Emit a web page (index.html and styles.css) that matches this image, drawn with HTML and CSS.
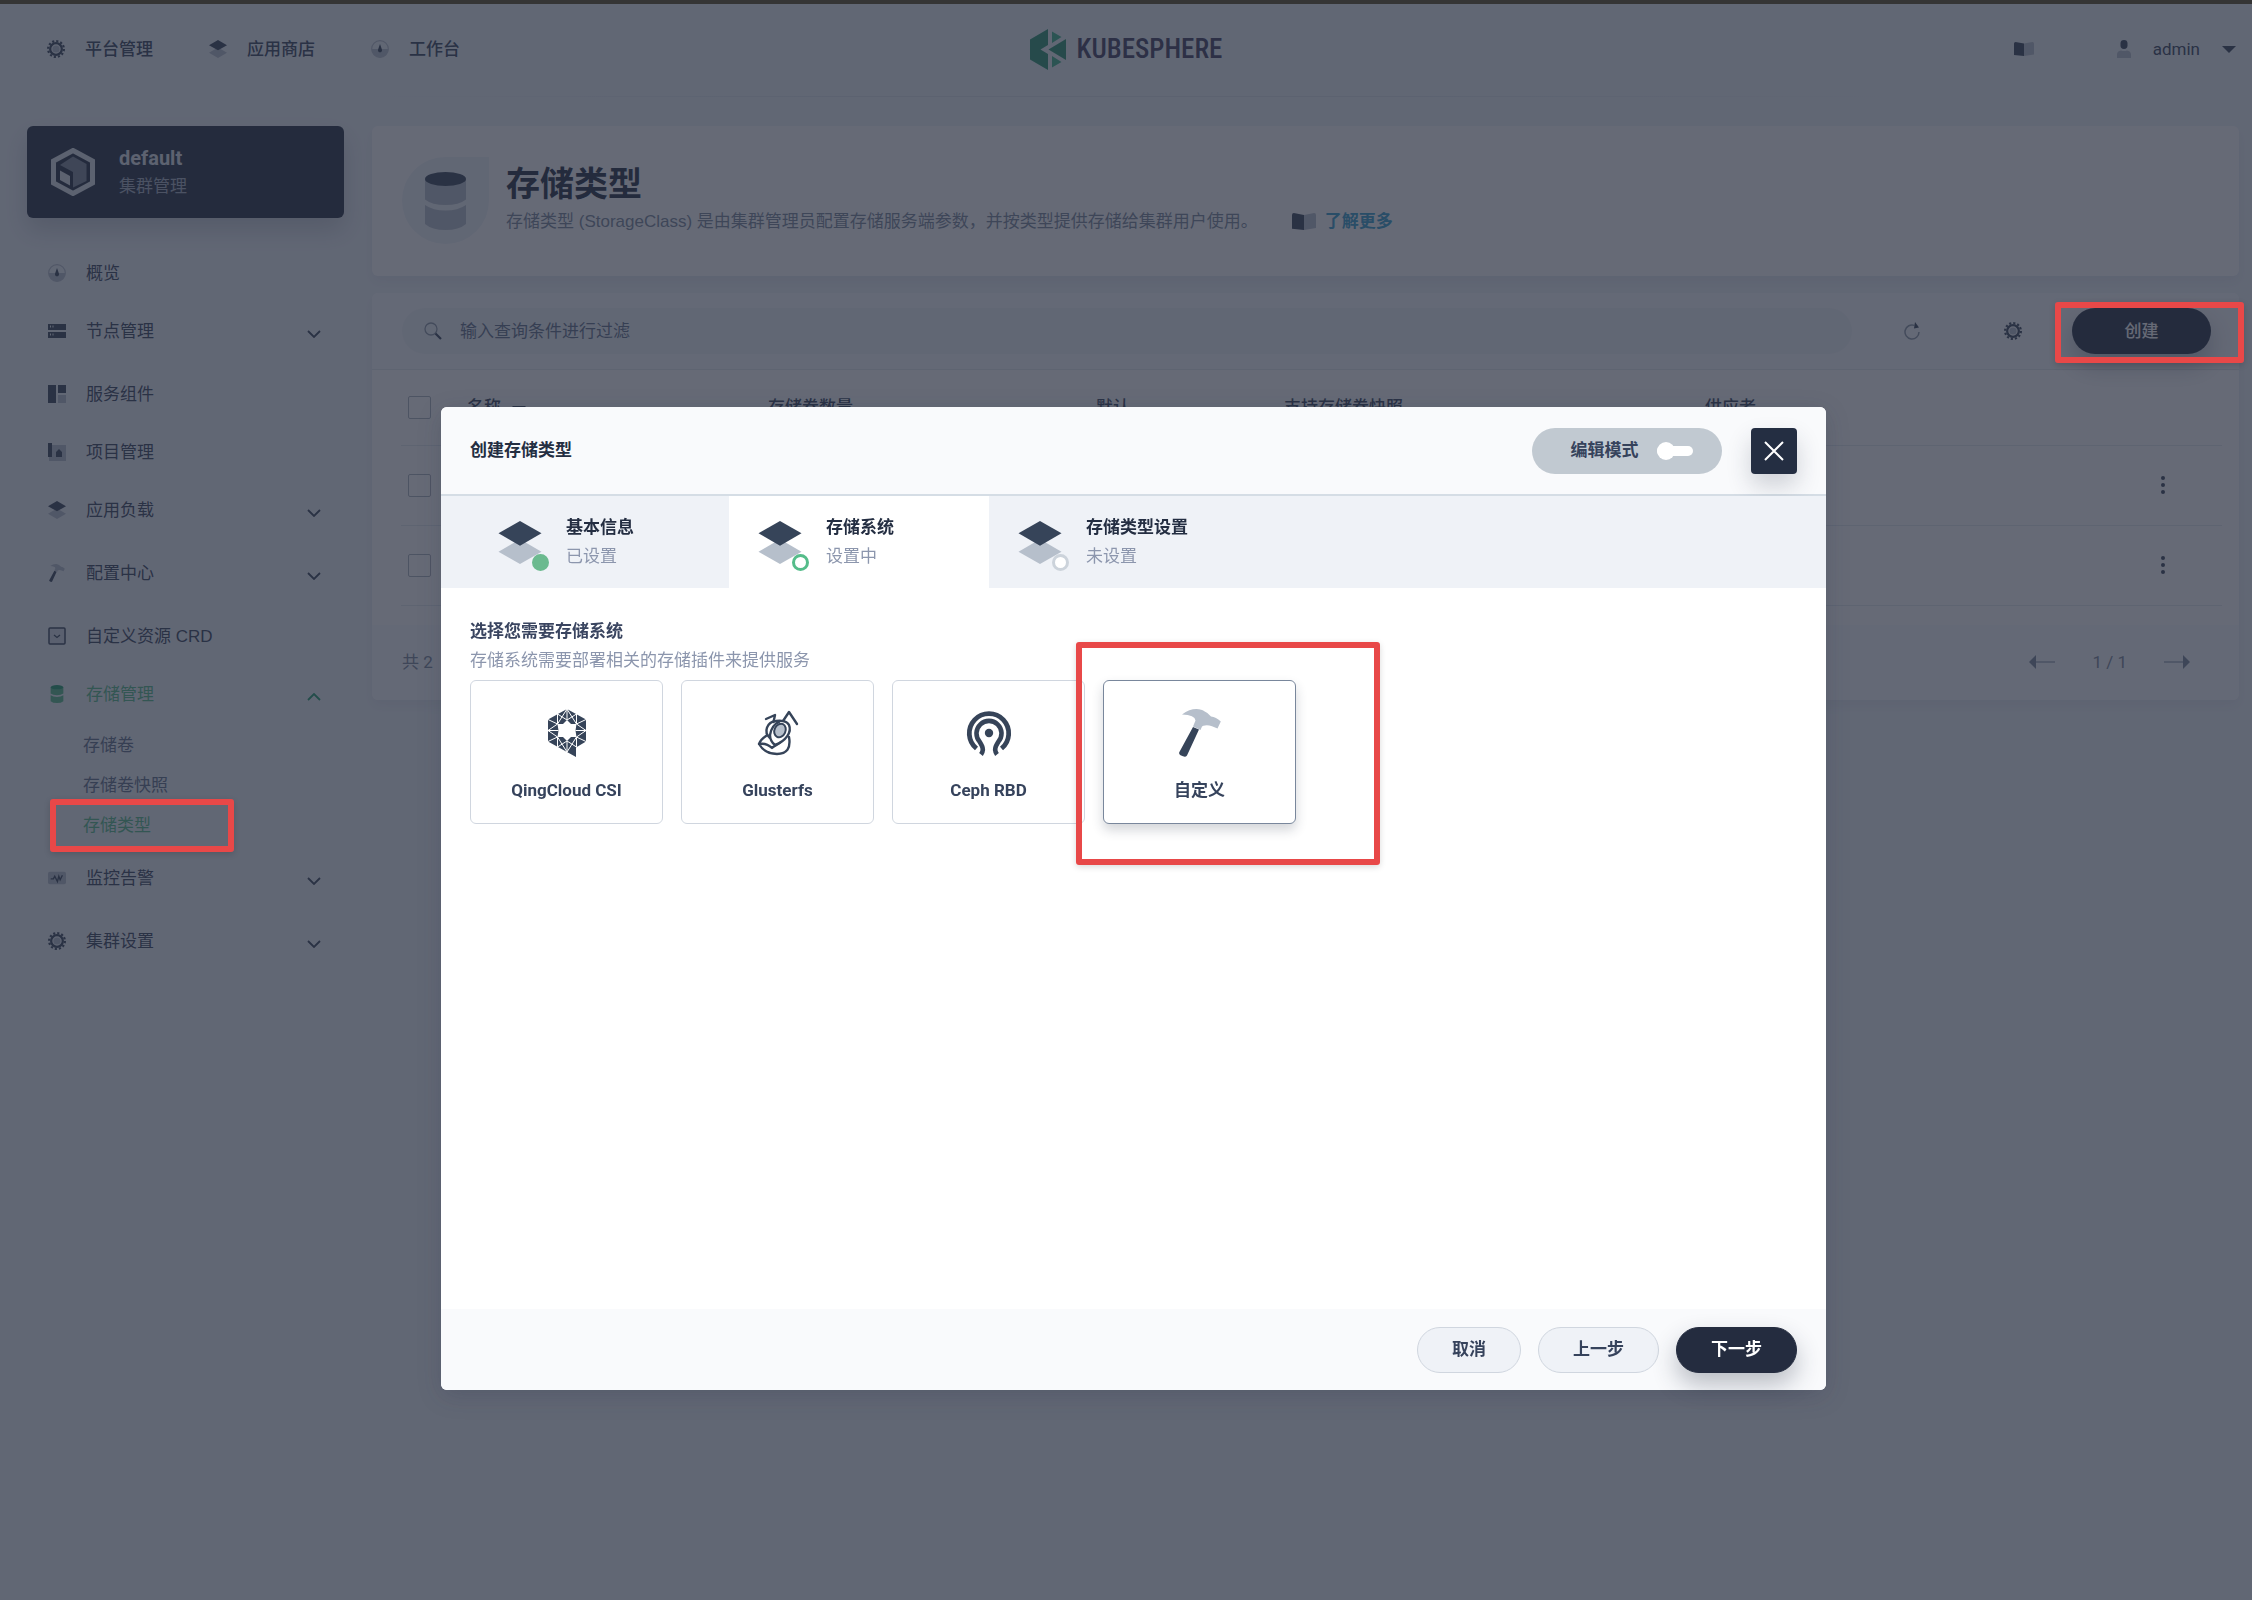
FILE: index.html
```html
<!DOCTYPE html>
<html lang="zh-CN">
<head>
<meta charset="utf-8">
<title>KubeSphere</title>
<meta name="viewport" content="width=device-width, initial-scale=1">
<link rel="stylesheet" href="styles.css">
</head>
<body>
<svg class="sprite" aria-hidden="true">
  <symbol id="i-gear" viewBox="0 0 16 16">
    <circle class="s-dark" cx="8" cy="8" r="7" stroke-width="2" stroke-dasharray="1.9 1.765"/>
    <circle class="s-dark" cx="8" cy="8" r="5.2" stroke-width="2"/>
    <circle class="light" cx="8" cy="8" r="3.2"/>
  </symbol>
  <symbol id="i-layers" viewBox="0 0 32 32">
    <path class="light" d="M16 13.500 32 22.800 16 32 0 22.800z"/>
    <path class="dark" d="M16 0 32 9.200 16 18.400 0 9.200z"/>
  </symbol>
  <symbol id="i-gauge" viewBox="0 0 16 16">
    <circle class="s-light" cx="8" cy="8" r="7.400" stroke-width="1"/>
    <path class="light" d="M.5 8h15a7.500 7.500 0 0 1-15 0z"/>
    <path class="dark" d="M8 3.500 9.700 8.500A1.800 1.800 0 1 1 6.300 8.500z"/>
  </symbol>
  <symbol id="i-book" viewBox="0 0 20 14">
    <path class="light" d="M10 1.500 18.500 0Q20 0 20 1.500V12.500L10 14z"/>
    <path class="dark" d="M0 1.500Q0 0 1.500 0L10 1.500V14L0 13z"/>
  </symbol>
  <symbol id="i-user" viewBox="0 0 14 18">
    <rect class="dark" x="3.500" y="0" width="7" height="9" rx="3.400"/>
    <path class="light" d="M0 18v-3.500C0 12 1.500 11 4 10.500q3 1.200 6 0c2.500.5 4 1.500 4 4V18z"/>
  </symbol>
  <symbol id="i-nodes" viewBox="0 0 18 16">
    <path class="dark" fill-rule="evenodd" d="M0 1h18v6H0zM2 2.500v2h1v-2zM4.500 2.500v2h1v-2zM0 9h18v6H0zM2 10.500v2h1v-2zM4.500 10.500v2h1v-2z"/>
  </symbol>
  <symbol id="i-components" viewBox="0 0 18 18">
    <path class="dark" d="M0 0h8v18H0zM10 0h8v8h-8z"/><path class="light" d="M10 10h8v8h-8z"/>
  </symbol>
  <symbol id="i-project" viewBox="0 0 18 18">
    <path class="light" d="M4 2h14v16H1V14h3z"/><path class="dark" d="M0 0h4v14H0zM11 6l3 3v5H8V9z"/>
  </symbol>
  <symbol id="i-hammer" viewBox="0 0 42 48">
    <path class="dark" d="M14 18 20 20.500 8 46.500Q6.500 48.500 4 47.300L1.500 46.200Q-.5 45 .4 43z"/>
    <path class="light" d="M3 5.500Q12-1 20 .3Q27 1.500 32 7.500Q37 8 41.800 12.500L38.500 19.500 33 17.200Q27 15 23 17.500L21.500 21 14 17.500 16.500 11.500Q16 6 3 5.500z"/>
  </symbol>
  <symbol id="i-crd" viewBox="0 0 18 18">
    <rect class="light" x="1" y="1" width="16" height="16" opacity=".4"/>
    <rect class="s-dark" x="1" y="1" width="16" height="16" rx="1" stroke-width="1.500"/>
    <path class="s-dark" d="M6 8l3 2.500L12 8" stroke-width="1.300"/>
  </symbol>
  <symbol id="i-disk" viewBox="0 0 41 58">
    <path class="light" d="M0 7h41v20.500Q34 33 20.500 33T0 27.500zM0 33q8 5.500 20.500 5.500T41 33v19q-7 6-20.500 6T0 52z"/>
    <ellipse class="dark" cx="20.500" cy="7" rx="20.500" ry="7"/>
  </symbol>
  <symbol id="i-monitor" viewBox="0 0 20 14">
    <rect class="light" width="20" height="14" rx="2"/>
    <path class="s-dark" d="M3 8h3l1.500-3 3 6L12 5l1.500 4L16 4" stroke-width="1.500"/>
  </symbol>
  <symbol id="i-chevron" viewBox="0 0 14 8"><path class="s-dark" d="M1 1l6 6 6-6" stroke-width="1.800"/></symbol>
  <symbol id="i-caret" viewBox="0 0 14 7"><path class="dark" d="M0 0h14L7 7z"/></symbol>
  <symbol id="i-arrow" viewBox="0 0 26 14"><path class="dark" d="M0 7 7 0v14z"/><path class="light" d="M7 6h19v2H7z"/></symbol>
  <symbol id="i-dots" viewBox="0 0 4 18"><g class="dark"><circle cx="2" cy="2" r="2"/><circle cx="2" cy="9" r="2"/><circle cx="2" cy="16" r="2"/></g></symbol>
</svg>

<div class="page">
  <header class="topbar">
    <nav class="topnav">
      <a href="#"><svg><use href="#i-gear"/></svg>平台管理</a>
      <a href="#"><svg><use href="#i-layers"/></svg>应用商店</a>
      <a href="#"><svg><use href="#i-gauge"/></svg>工作台</a>
    </nav>
    <a class="logo" href="#">
      <svg viewBox="0 0 36 41" aria-hidden="true">
        <path class="g1" d="M0 10.500 18 0v16L10.500 20.500 18 25v16L0 30.500z"/>
        <path class="g2" d="M22 2.500 31.500 8 22 14zM22 27l9.500 6L22 38.500z"/>
        <path class="g1" d="M36 10v21L18.500 20.500z"/>
      </svg>
      <span>KUBESPHERE</span>
    </a>
    <div class="account">
      <a class="docs" href="#" aria-label="文档"><svg><use href="#i-book"/></svg></a>
      <button class="user" type="button">
        <svg class="avatar"><use href="#i-user"/></svg><span>admin</span><svg class="caret"><use href="#i-caret"/></svg>
      </button>
    </div>
  </header>

  <div class="columns">
    <aside class="sidebar">
      <a class="cluster" href="#">
        <svg viewBox="0 0 44 48" aria-hidden="true">
          <path class="rim" d="M22 2.500 41.500 13v22L22 45.500 2.500 35V13z"/>
          <path class="cube" d="M22 8.500 35.500 16v17L22 39.500V24L9 17z"/>
          <path class="face" d="M9 22.500 19 28v9.500L9 32z"/>
        </svg>
        <span class="cluster-text"><strong>default</strong><span>集群管理</span></span>
      </a>
      <ul class="menu">
        <li><a href="#"><svg><use href="#i-gauge"/></svg>概览</a></li>
        <li class="more"><a href="#"><svg><use href="#i-nodes"/></svg>节点管理<svg class="chev"><use href="#i-chevron"/></svg></a></li>
        <li><a href="#"><svg><use href="#i-components"/></svg>服务组件</a></li>
        <li><a href="#"><svg><use href="#i-project"/></svg>项目管理</a></li>
        <li class="more"><a href="#"><svg><use href="#i-layers"/></svg>应用负载<svg class="chev"><use href="#i-chevron"/></svg></a></li>
        <li class="more"><a href="#"><svg><use href="#i-hammer"/></svg>配置中心<svg class="chev"><use href="#i-chevron"/></svg></a></li>
        <li><a class="plain" href="#"><svg><use href="#i-crd"/></svg>自定义资源 CRD</a></li>
        <li class="open"><a class="active" href="#"><svg><use href="#i-disk"/></svg>存储管理<svg class="chev up"><use href="#i-chevron"/></svg></a>
          <ul class="submenu">
            <li><a href="#">存储卷</a></li>
            <li><a href="#">存储卷快照</a></li>
            <li class="marked"><a class="active" href="#">存储类型</a><span class="mark mark-menu"></span></li>
          </ul>
        </li>
        <li class="more"><a href="#"><svg><use href="#i-monitor"/></svg>监控告警<svg class="chev"><use href="#i-chevron"/></svg></a></li>
        <li class="more"><a href="#"><svg><use href="#i-gear"/></svg>集群设置<svg class="chev"><use href="#i-chevron"/></svg></a></li>
      </ul>
    </aside>

    <main class="content">
      <section class="banner">
        <div class="badge"><svg><use href="#i-disk"/></svg></div>
        <div>
          <h1>存储类型</h1>
          <p class="plain">存储类型 (StorageClass) 是由集群管理员配置存储服务端参数，并按类型提供存储给集群用户使用。<a href="#"><svg><use href="#i-book"/></svg>了解更多</a></p>
        </div>
      </section>

      <section class="panel">
        <div class="toolbar">
          <label class="search">
            <svg viewBox="0 0 18 18" aria-hidden="true"><circle class="s-mid" cx="7" cy="7" r="6" stroke-width="1.300"/><path class="s-dark" d="M11.500 11.500 17 17" stroke-width="2.200"/></svg>
            <input type="text" placeholder="输入查询条件进行过滤" aria-label="输入查询条件进行过滤">
          </label>
          <div class="tools">
            <button type="button" aria-label="刷新"><svg viewBox="0 0 18 18"><path class="s-mid" d="M11.500 3.400A7 7 0 1 0 16 10" stroke-width="1.500"/><path class="dark" d="M12 0l4 5.500-5 1z"/></svg></button>
            <button type="button" aria-label="设置"><svg><use href="#i-gear"/></svg></button>
          </div>
          <div class="marked"><button class="create" type="button">创建</button><span class="mark mark-create"></span></div>
        </div>
        <div class="table-wrap">
          <table>
            <colgroup><col class="c-check"><col class="c-name"><col class="c-count"><col class="c-default"><col class="c-snap"><col><col class="c-more"></colgroup>
            <thead><tr>
              <th><input type="checkbox" aria-label="全选"></th>
              <th>名称<svg class="sort"><use href="#i-caret"/></svg></th><th>存储卷数量</th><th>默认</th><th>支持存储卷快照</th><th>供应者</th><th></th>
            </tr></thead>
            <tbody>
              <tr><td><input type="checkbox" aria-label="选择"></td><td></td><td></td><td></td><td></td><td></td><td><button type="button" aria-label="更多"><svg><use href="#i-dots"/></svg></button></td></tr>
              <tr><td><input type="checkbox" aria-label="选择"></td><td></td><td></td><td></td><td></td><td></td><td><button type="button" aria-label="更多"><svg><use href="#i-dots"/></svg></button></td></tr>
            </tbody>
          </table>
        </div>
        <div class="pager">
          <span>共 2</span>
          <div class="pages">
            <button type="button" aria-label="上一页"><svg><use href="#i-arrow"/></svg></button>
            <span>1 / 1</span>
            <button type="button" aria-label="下一页"><svg class="next"><use href="#i-arrow"/></svg></button>
          </div>
        </div>
      </section>
    </main>
  </div>
</div>

<div class="overlay">
  <div class="modal" role="dialog" aria-labelledby="dialog-title">
    <header class="modal-head">
      <h2 id="dialog-title">创建存储类型</h2>
      <button class="mode" type="button">编辑模式<span class="switch"></span></button>
      <button class="close" type="button" aria-label="关闭"><svg viewBox="0 0 22 22"><path d="M2 2l18 18M20 2 2 20"/></svg></button>
    </header>
    <div class="steps">
      <button class="step done" type="button"><span class="step-icon"><svg><use href="#i-layers"/></svg><i></i></span><span class="step-text"><b>基本信息</b><span>已设置</span></span></button>
      <button class="step current" type="button"><span class="step-icon"><svg><use href="#i-layers"/></svg><i></i></span><span class="step-text"><b>存储系统</b><span>设置中</span></span></button>
      <button class="step" type="button"><span class="step-icon"><svg><use href="#i-layers"/></svg><i></i></span><span class="step-text"><b>存储类型设置</b><span>未设置</span></span></button>
    </div>
    <div class="modal-body">
      <h3>选择您需要存储系统</h3>
      <p>存储系统需要部署相关的存储插件来提供服务</p>
      <div class="options">
        <button class="option" type="button">
          <svg viewBox="0 0 48 48" aria-hidden="true">
            <path class="dark" fill-rule="evenodd" d="M24 0 43 10.500V32.500L33 38.500V48L24 43 5 32.500V10.500zM24 11 20 15 14.500 15 15.500 21.500 14.500 28 20 28 24 32 28 28 33.500 28 32.500 21.500 33.500 15 28 15z"/>
            <path class="mesh" d="M14.500 5v10M33.500 5v10M24 0v11M24 32v11M14.500 28v10M33.500 28v10M5 10.500l9.500 4.500 9.500-15M43 10.500l-9.500 4.500L24 0M14.500 5l9.500 6 9.500-6M5 32.500l9.500-4.500L24 43M43 32.500l-9.500-4.500L24 43M14.500 38l9.500-6 9.500 6M14.500 15 5 21.500l9.500 6.500M33.500 15l9.500 6.500-9.500 6.500M5 21.500h10.500M32.500 21.500H43"/>
          </svg>QingCloud CSI
        </button>
        <button class="option" type="button">
          <svg viewBox="0 0 48 48" aria-hidden="true">
            <g class="s-dark" stroke-width="2.400" stroke-linejoin="round" stroke-linecap="round">
              <path d="M12 10l9-4-1.500 7M29 12l6-9 8 12"/>
              <path d="M16 29C9 23 13 13 22 12c5-1 11 0 13 4 3 7-3 16-14 20-4-3-5-6-5-10 1-6 4-11 9-13"/>
              <path d="M12 27c-3 2-6 5-7 8 3 5 9 10 18 10 10 0 14-6 12-17M5 35c5-1 9 0 13 4 3-3 6-3 9-6"/>
            </g>
            <ellipse class="eye" cx="26" cy="21.500" rx="5.500" ry="7" transform="rotate(25 26 21.500)"/>
          </svg>Glusterfs
        </button>
        <button class="option" type="button">
          <svg viewBox="0 0 48 48" aria-hidden="true">
            <circle class="dark" cx="24" cy="24" r="4.200"/>
            <g class="s-dark">
              <path d="M11.500 39.500A19.700 19.700 0 1 1 36.500 39.500" stroke-width="4.800"/>
              <path d="M16 45.500q3-4 1-8.500-1-2-2.500-4.500A12.500 12.500 0 1 1 33.500 32.500q-1.500 2.500-2.500 4.500-2 4.500 1 8.500" stroke-width="4.600"/>
            </g>
          </svg>Ceph RBD
        </button>
        <div class="marked">
          <button class="option selected" type="button"><svg><use href="#i-hammer"/></svg>自定义</button>
          <span class="mark mark-option"></span>
        </div>
      </div>
    </div>
    <footer class="modal-foot">
      <button type="button">取消</button>
      <button class="wide" type="button">上一步</button>
      <button class="wide primary" type="button">下一步</button>
    </footer>
  </div>
</div>
</body>
</html>
```
FILE: styles.css
```css
:root {
  --dark: #364459;
  --light: #b6bfcb;
  --ink: #36435c;
  --muted: #79879c;
  --navy: #242e42;
  --green: #55bc8a;
  --red: #e84848;
}

* { box-sizing: border-box; }

body {
  margin: 0;
  min-height: 100vh;
  border-top: 4px solid #353535;
  background: #eff4f9;
  color: var(--ink);
  font: 17px/29px Roboto, "Noto Sans CJK SC", sans-serif;
}

a { color: inherit; text-decoration: none; }
button { padding: 0; border: 0; background: none; color: inherit; font: inherit; cursor: pointer; }
h1, h2, h3, p, ul { margin: 0; padding: 0; }
ul { list-style: none; }
svg { display: block; flex: none; }

.sprite { position: absolute; width: 0; height: 0; }
.dark { fill: var(--dark); }
.light { fill: var(--light); }
.s-dark { fill: none; stroke: var(--dark); }
.s-light { fill: none; stroke: var(--light); }
.s-mid { fill: none; stroke: #8b97a6; }
.plain { font-family: "Liberation Sans", "Noto Sans CJK SC", sans-serif; }

/* top bar */
.topbar {
  display: grid;
  grid-template-columns: 1fr auto 1fr;
  align-items: center;
  height: 93px;
  padding: 0 16px 3px;
  background: linear-gradient(90deg, transparent 15%, #dce4ec 38% 62%, transparent 85%) bottom / 100% 1px no-repeat;
}
.topnav { display: flex; gap: 56px; margin-left: 31px; font-weight: 500; }
.topnav a { display: flex; align-items: center; gap: 20px; }
.topnav svg { width: 18px; height: 18px; }
.logo { display: flex; align-items: center; gap: 11px; color: #403f5e; font: 500 27px/41px "Liberation Sans Narrow", "Roboto Condensed", Roboto, sans-serif; }
.logo svg { width: 36px; height: 41px; }
.g1 { fill: #2a9570; }
.g2 { fill: #3fb58a; }
.account { display: flex; justify-content: flex-end; align-items: center; gap: 83px; }
.docs svg { width: 20px; height: 14px; }
.user { display: flex; align-items: center; gap: 22px; }
.avatar { width: 14px; height: 18px; }
.caret { width: 14px; height: 7px; }

/* columns */
.columns { display: grid; grid-template-columns: 317px 1fr; gap: 28px; padding: 29px 13px 40px 27px; align-items: start; }

.cluster {
  display: flex;
  align-items: center;
  gap: 24px;
  height: 92px;
  padding: 0 24px;
  border-radius: 6px;
  background: var(--navy);
  box-shadow: 0 12px 24px rgba(36, 46, 66, .2);
  color: #fff;
}
.cluster svg { width: 44px; height: 48px; }
.rim { fill: none; stroke: #dde4ea; stroke-width: 5; }
.cube { fill: #7c8798; }
.face { fill: #dde4ea; }
.cluster-text { display: flex; flex-direction: column; color: #a5aec0; }
.cluster-text strong { color: #dfe4ea; font-size: 20px; line-height: 28px; }

.menu { padding-top: 32px; }
.menu > li { margin-bottom: 12px; }
.menu > .more { margin-bottom: 17px; }
.menu > li > a { display: flex; align-items: center; gap: 20px; height: 46px; padding: 0 23px 0 21px; }
.menu svg { width: 18px; height: 18px; }
.menu .chev { width: 14px; height: 8px; margin: 6px 0 0 auto; }
.menu .up { transform: rotate(180deg); }
.menu .active { --dark: #1f9d6c; --light: #55bc8a; color: var(--green); }
.menu .open { margin-bottom: 10px; }
.submenu { padding: 8px 0 0 56px; color: #5f708a; }
.submenu a { display: block; height: 40px; line-height: 40px; }

.marked { position: relative; }
.mark { position: absolute; z-index: 20; border: 6px solid var(--red); border-radius: 3px; box-shadow: 0 2px 6px rgba(0, 0, 0, .15); pointer-events: none; }
.mark-menu { left: -33px; top: -6px; width: 184px; height: 53px; }
.mark-create { inset: -6px -33px -9px -17px; }
.mark-option { inset: -38px -84px -41px -27px; }

/* content */
.content { display: flex; flex-direction: column; gap: 17px; min-width: 0; }
.banner, .panel { border-radius: 6px; background: #fff; box-shadow: 0 6px 12px rgba(36, 46, 66, .06); }
.banner { display: flex; gap: 17px; height: 150px; padding: 31px 30px; }
.badge { display: grid; place-items: center; width: 87px; height: 87px; border-radius: 50% 0 50% 50%; background: #eff4f9; }
.badge svg { width: 41px; height: 58px; }
.banner h1 { padding-top: 4px; color: var(--navy); font-size: 34px; line-height: 46px; font-weight: 700; }
.banner p { display: flex; align-items: center; color: var(--muted); }
.banner p a { display: flex; align-items: center; gap: 9px; margin-left: 34px; color: #329dce; font-weight: 700; }
.banner p svg { width: 24px; height: 17px; }

.toolbar { display: flex; gap: 9px; padding: 15px 28px 15px 30px; border-bottom: 1px solid #e3e9ef; border-radius: 6px 6px 0 0; background: #f9fbfd; }
.search { display: flex; flex: 1; align-items: center; gap: 18px; height: 46px; padding: 0 22px; border-radius: 23px; background: #eff4f9; }
.search svg { width: 18px; height: 18px; }
.search input { flex: 1; padding: 0; border: 0; outline: 0; background: none; color: inherit; font: inherit; }
.search input::placeholder { color: #5f708a; opacity: 1; }
.tools { display: flex; }
.tools button { display: grid; place-items: center; width: 101px; }
.tools svg { width: 18px; height: 18px; }
.create { display: block; width: 139px; height: 46px; border-radius: 23px; background: var(--navy); box-shadow: 0 12px 24px rgba(36, 46, 66, .3); color: #fff; font-weight: 500; }

.table-wrap { padding: 0 17px 19px 29px; }
table { width: 100%; border-collapse: collapse; table-layout: fixed; }
.c-check { width: 66px; }
.c-name { width: 301px; }
.c-count { width: 328px; }
.c-default { width: 188px; }
.c-snap { width: 421px; }
.c-more { width: 119px; }
th, td { height: 80px; padding: 0; border-bottom: 1px solid #e3e9ef; text-align: left; font-weight: 500; }
th { height: 75px; color: var(--ink); }
td:last-child button { display: grid; place-items: center; width: 120px; height: 46px; }
td svg { width: 4px; height: 18px; }
.sort { display: inline-block; width: 14px; height: 7px; margin-left: 11px; }
input[type="checkbox"] { display: block; appearance: none; width: 23px; height: 23px; margin: 0 0 0 7px; border: 1px solid #abb4be; border-radius: 2px; background: #fff; }

.pager { display: flex; justify-content: space-between; align-items: center; height: 75px; padding: 0 49px 0 30px; border-radius: 0 0 6px 6px; background: #f9fbfd; color: var(--muted); }
.pages { display: flex; align-items: center; gap: 37px; }
.pages svg { width: 26px; height: 14px; --dark: #79879c; }
.next { transform: rotate(180deg); }

/* dialog */
.overlay {
  position: fixed;
  inset: 4px 0 0;
  z-index: 10;
  display: flex;
  justify-content: center;
  align-items: flex-start;
  padding: 403px 0 40px 15px;
  background: rgba(37, 43, 60, .7);
}
.modal { display: flex; flex-direction: column; width: 100%; max-width: 1385px; border-radius: 6px; background: #fff; box-shadow: 0 6px 24px rgba(36, 46, 66, .2); }
.modal-head { display: flex; align-items: center; gap: 29px; height: 89px; padding: 0 29px; border-bottom: 2px solid #d5dde5; border-radius: 6px 6px 0 0; background: #f9fafc; }
.modal-head h2 { flex: 1; color: var(--navy); font-size: 17px; font-weight: 700; }
.mode { display: flex; align-items: center; justify-content: center; gap: 18px; width: 190px; height: 46px; padding-left: 9px; border-radius: 23px; background: #c1c9d1; font-weight: 700; }
.switch { position: relative; width: 36px; height: 10px; border-radius: 5px; background: #fff; }
.switch::before { content: ""; position: absolute; left: 0; top: -4px; width: 18px; height: 18px; border-radius: 50%; background: #fff; }
.close { display: grid; place-items: center; width: 46px; height: 46px; border-radius: 4px; background: var(--navy); box-shadow: 0 12px 24px rgba(36, 46, 66, .2); }
.close svg { width: 22px; height: 22px; stroke: #fff; stroke-width: 2; }

.steps { display: flex; padding-left: 28px; background: #eff2f7; }
.step { display: flex; align-items: center; gap: 24px; width: 260px; height: 92px; padding-left: 29px; text-align: left; white-space: nowrap; }
.step.current { background: #fff; }
.step-icon { position: relative; }
.step-icon svg { width: 44px; height: 43px; }
.step-icon i { position: absolute; right: -7px; bottom: -7px; width: 17px; height: 17px; border: 3px solid #ccd3db; border-radius: 50%; background: #fff; }
.done i { border-color: #6bba8f; background: #6bba8f; }
.current i { border-color: var(--green); }
.step-text { display: flex; flex-direction: column; color: #8c96ad; }
.step-text b { color: var(--navy); }

.modal-body { height: 721px; padding: 29px; }
.modal-body h3 { font-size: 17px; font-weight: 700; color: #3a4560; }
.modal-body p { margin-bottom: 5px; color: #8c96ad; }
.options { display: flex; gap: 18px; }
.option { display: flex; flex-direction: column; align-items: center; gap: 19px; width: 193px; height: 144px; padding-top: 28px; border: 1px solid #d0d6df; border-radius: 6px; background: #fff; font-weight: 700; }
.option svg { width: 48px; height: 48px; }
.option.selected { border-color: #79879c; box-shadow: 0 6px 12px rgba(36, 46, 66, .2); }
.mesh { fill: none; stroke: #fff; stroke-width: 1; }
.eye { fill: #b6bfcb; stroke: #364459; stroke-width: 2; }

.modal-foot { display: flex; justify-content: flex-end; align-items: center; gap: 17px; height: 81px; padding: 0 29px; border-radius: 0 0 6px 6px; background: #f9fafc; }
.modal-foot button { width: 104px; height: 46px; border: 1px solid #d0d6df; border-radius: 23px; background: #eff2f7; font-weight: 700; }
.modal-foot .wide { width: 121px; }
.modal-foot .primary { border-color: #242c3f; background: #242c3f; box-shadow: 0 12px 24px rgba(36, 46, 66, .3); color: #fff; }
```
